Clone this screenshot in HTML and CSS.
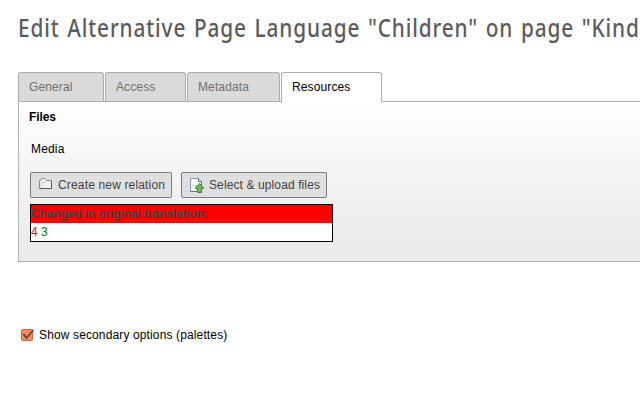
FILE: index.html
```html
<!DOCTYPE html>
<html lang="en">
<head>
<meta charset="utf-8">
<title>Edit Alternative Page Language</title>
<link rel="stylesheet" href="styles.css">
</head>
<body>
<main>
<h1><span>Edit Alternative Page Language "Children" on page "Kind</span></h1>
<nav class="tabs">
<a class="tab general">General</a>
<a class="tab access">Access</a>
<a class="tab metadata">Metadata</a>
<a class="tab resources active">Resources</a>
</nav>
<section class="panel">
<h2>Files</h2>
<div class="label">Media</div>
<div class="actions">
<button class="create"><svg width="14" height="12" viewBox="0 0 14 12"><path d="M.5 2.5H1.500L2.500.5H5.500L7.500 2.500H12.500V10.500H.5Z" fill="#f2f3f5" stroke="#858c9a"/><path d="M.5 10.500H12.500V3" fill="none" stroke="#535960"/><path d="M2.500 10V4.500H6L7.500 3.500" fill="none" stroke="#c8cdd5"/></svg><span>Create new relation</span></button>
<button class="upload"><svg width="14" height="15" viewBox="0 0 14 15"><path d="M.5.5H8.5L11.5 3.5V13.5H.5Z" fill="#fafcff" stroke="#7f96b4"/><path d="M.5 13.5H11.5V4" fill="none" stroke="#5c6f8b"/><path d="M8.500.5V3.500H11.500" fill="#dce4ef" stroke="#536987"/><path d="M2 7.500H7" stroke="#c0c5cb" stroke-dasharray="2 1"/><path d="M9.500 5.500L13.500 9.500V10.500H11.500V14.500H7.500V10.500H5.500V9.500Z" fill="#70b55b" stroke="#3f8732"/></svg><span>Select &amp; upload files</span></button>
</div>
<div class="diff">
<div class="diff-title">Changed in original translation:</div>
<div class="diff-values"><span class="removed">4</span> <span class="added">3</span></div>
</div>
</section>
<label class="palettes"><svg width="14" height="13" viewBox="0 0 14 13"><rect x=".5" y=".5" width="11" height="11" rx="1" fill="#f58a60" stroke="#c0694d"/><path d="M2.500 5L5.500 9L12.500 1" fill="none" stroke="#674337" stroke-width="1.700"/></svg><span>Show secondary options (palettes)</span></label>
</main>
</body>
</html>
```
FILE: styles.css
```css
* { box-sizing: border-box; }
body {
  margin: 0;
  height: 400px;
  overflow: hidden;
  background: #fff;
  color: #000;
  font: 12px/18px "Liberation Sans", Arial, sans-serif;
}
main { padding: 9px 0 0 18px; }
h1 {
  margin: 0;
  height: 63px;
  color: #5c5c5c;
  font: 500 26px/36px "Noto Sans", sans-serif;
  white-space: nowrap;
}
h1 span {
  display: inline-block;
  letter-spacing: 1.1px;
  word-spacing: 1.7px;
  transform: scaleX(.8);
  transform-origin: left;
}
.tabs { display: flex; gap: 1px; height: 29px; }
.tab {
  height: 29px;
  padding: 5px 10px;
  border: 1px solid #adadad;
  border-bottom: 0;
  border-radius: 3px 3px 0 0;
  background: #dadada;
  color: #707070;
  letter-spacing: .12px;
}
.general { width: 86px; }
.access { width: 81px; }
.metadata { width: 93px; }
.resources { width: 101px; }
.active { height: 30px; background: #fff; color: #000; position: relative; }
.panel {
  height: 161px;
  padding: 6px 0 0 11px;
  border: 1px solid #b0b0b0;
  border-right: 0;
  background: linear-gradient(#fff, #ebebeb 85%);
}
h2 { margin: 0 0 0 -1px; font-size: 12px; line-height: 18px; letter-spacing: -.1px; }
.label { margin: 14px 0 0 1px; letter-spacing: .16px; }
.actions { display: flex; gap: 9px; margin-top: 14px; }
button {
  display: flex;
  align-items: center;
  height: 26px;
  padding: 0 0 0 8px;
  border: 1px solid #7c7c7c;
  border-radius: 2px;
  background: #dfdfdf;
  color: #434343;
  font: 12px/18px "Liberation Sans", Arial, sans-serif;
  white-space: nowrap;
}
button svg { margin-right: 5px; flex: none; }
.create { width: 142px; letter-spacing: .16px; }
.create svg { margin-top: -2px; }
.upload { width: 146px; letter-spacing: .11px; }
.diff {
  width: 303px;
  height: 38px;
  margin-top: 6px;
  border: 1px solid #000;
  background: #fff;
}
.diff-title {
  height: 18px;
  background: #f00;
  color: #434343;
  font-weight: 700;
  letter-spacing: -.12px;
}
.removed { color: #f00; }
.added { color: #008000; }
.palettes { display: flex; align-items: center; margin: 64px 0 0 3px; letter-spacing: .13px; }
.palettes svg { margin-right: 4px; }
```
